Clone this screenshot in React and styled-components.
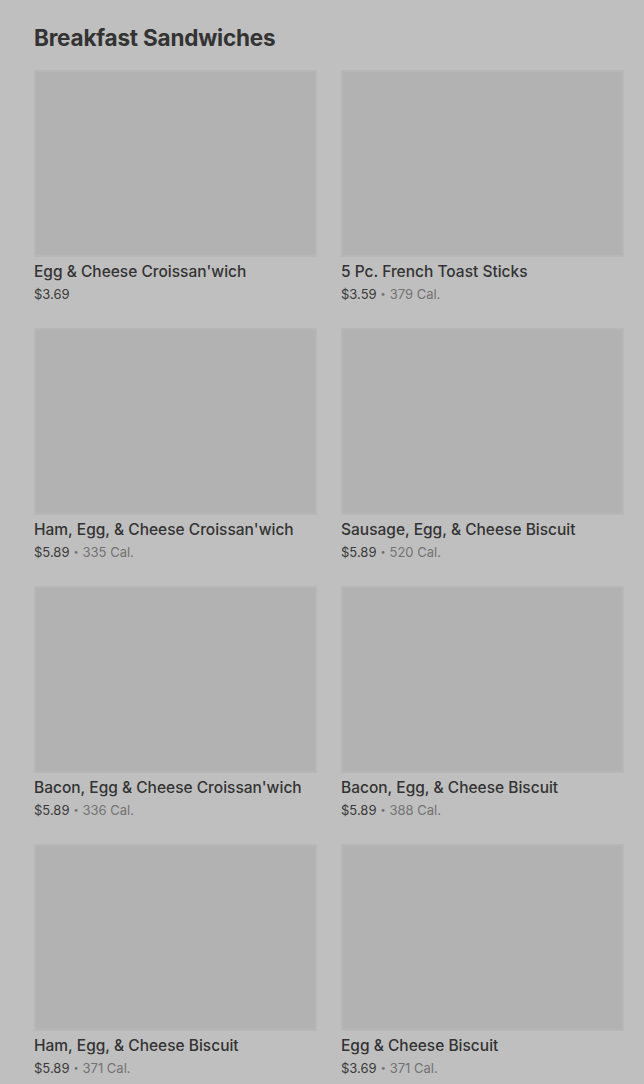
import React from "react";
import styled, { createGlobalStyle } from "styled-components";

const Global = createGlobalStyle`
  html, body { margin: 0; padding: 0; background: #bfbfbf; }
  body { font-family: Inter, "Noto Sans", Arial, sans-serif; -webkit-font-smoothing: antialiased; }
`;

const Page = styled.main`
  padding: 24px 20px 24px 34px;
  background: #bfbfbf;
  min-height: 1084px;
  box-sizing: border-box;
`;

const Heading = styled.h2`
  margin: 0 0 18px;
  font-size: 22.5px;
  line-height: 28px;
  font-weight: 700;
  letter-spacing: -0.2px;
  color: #333333;
`;

const Grid = styled.div`
  display: grid;
  grid-template-columns: 1fr 1fr;
  column-gap: 24px;
  row-gap: 24px;
`;

const Card = styled.div`
  display: flex;
  flex-direction: column;
`;

const Thumb = styled.div`
  height: 187px;
  background: #b2b2b2;
  box-shadow: inset 0 0 0 2px #b7b7b7;
`;

const Title = styled.div`
  margin-top: 5px;
  font-size: 15.5px;
  line-height: 20px;
  font-weight: 500;
  color: #333333;
  white-space: nowrap;
`;

const Meta = styled.div`
  margin-top: 2px;
  font-size: 13px;
  line-height: 20px;
  color: #3a3a3a;
  display: flex;
  align-items: center;
  gap: 4px;
`;

const Cal = styled.span`
  color: #737373;
`;

const Dot = styled.span`
  color: #737373;
  font-size: 9px;
`;

const items = [
  { name: "Egg & Cheese Croissan'wich", price: "$3.69" },
  { name: "5 Pc. French Toast Sticks", price: "$3.59", cal: "379 Cal." },
  { name: "Ham, Egg, & Cheese Croissan'wich", price: "$5.89", cal: "335 Cal." },
  { name: "Sausage, Egg, & Cheese Biscuit", price: "$5.89", cal: "520 Cal." },
  { name: "Bacon, Egg & Cheese Croissan'wich", price: "$5.89", cal: "336 Cal." },
  { name: "Bacon, Egg, & Cheese Biscuit", price: "$5.89", cal: "388 Cal." },
  { name: "Ham, Egg, & Cheese Biscuit", price: "$5.89", cal: "371 Cal." },
  { name: "Egg & Cheese Biscuit", price: "$3.69", cal: "371 Cal." },
];

export default function App() {
  return (
    <Page>
      <Global />
      <Heading>Breakfast Sandwiches</Heading>
      <Grid>
        {items.map((it) => (
          <Card key={it.name}>
            <Thumb />
            <Title>{it.name}</Title>
            <Meta>
              <span>{it.price}</span>
              {it.cal && (
                <>
                  <Dot>•</Dot>
                  <Cal>{it.cal}</Cal>
                </>
              )}
            </Meta>
          </Card>
        ))}
      </Grid>
    </Page>
  );
}
